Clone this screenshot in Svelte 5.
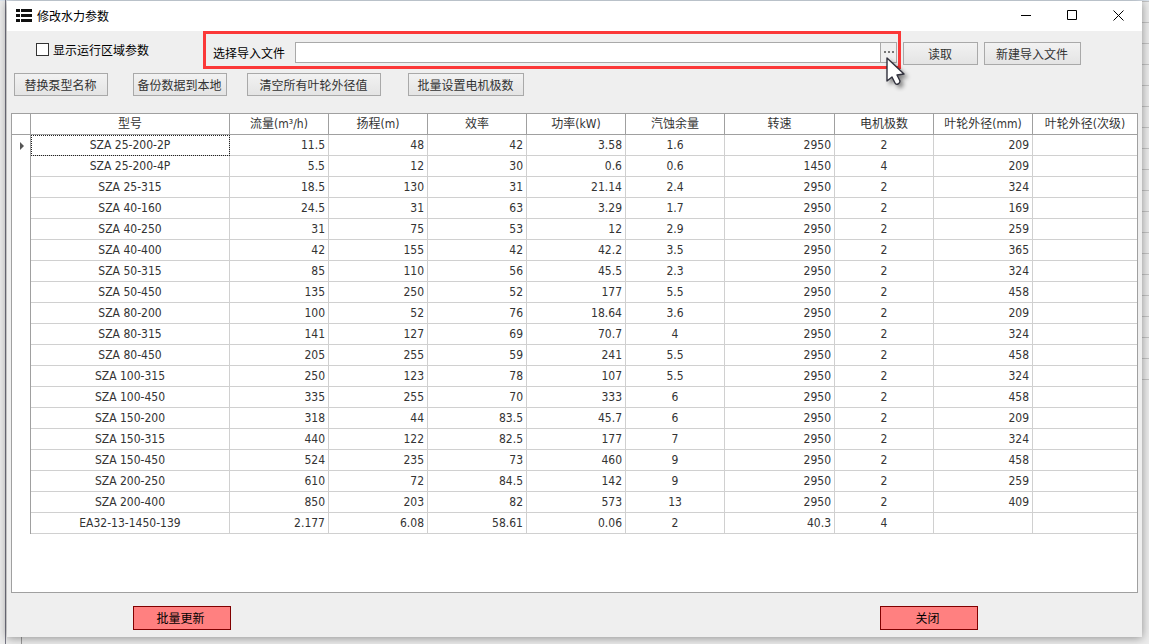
<script lang="ts">
    type Align = "center" | "right";

    interface Column {
        title: string;
        align: Align;
    }

    const columns: Column[] = [
        { title: "型号", align: "center" },
        { title: "流量(m³/h)", align: "right" },
        { title: "扬程(m)", align: "right" },
        { title: "效率", align: "right" },
        { title: "功率(kW)", align: "right" },
        { title: "汽蚀余量", align: "center" },
        { title: "转速", align: "right" },
        { title: "电机极数", align: "center" },
        { title: "叶轮外径(mm)", align: "right" },
        { title: "叶轮外径(次级)", align: "right" },
    ];

    const rows: string[][] = [
        ["SZA 25-200-2P", "11.5", "48", "42", "3.58", "1.6", "2950", "2", "209", ""],
        ["SZA 25-200-4P", "5.5", "12", "30", "0.6", "0.6", "1450", "4", "209", ""],
        ["SZA 25-315", "18.5", "130", "31", "21.14", "2.4", "2950", "2", "324", ""],
        ["SZA 40-160", "24.5", "31", "63", "3.29", "1.7", "2950", "2", "169", ""],
        ["SZA 40-250", "31", "75", "53", "12", "2.9", "2950", "2", "259", ""],
        ["SZA 40-400", "42", "155", "42", "42.2", "3.5", "2950", "2", "365", ""],
        ["SZA 50-315", "85", "110", "56", "45.5", "2.3", "2950", "2", "324", ""],
        ["SZA 50-450", "135", "250", "52", "177", "5.5", "2950", "2", "458", ""],
        ["SZA 80-200", "100", "52", "76", "18.64", "3.6", "2950", "2", "209", ""],
        ["SZA 80-315", "141", "127", "69", "70.7", "4", "2950", "2", "324", ""],
        ["SZA 80-450", "205", "255", "59", "241", "5.5", "2950", "2", "458", ""],
        ["SZA 100-315", "250", "123", "78", "107", "5.5", "2950", "2", "324", ""],
        ["SZA 100-450", "335", "255", "70", "333", "6", "2950", "2", "458", ""],
        ["SZA 150-200", "318", "44", "83.5", "45.7", "6", "2950", "2", "209", ""],
        ["SZA 150-315", "440", "122", "82.5", "177", "7", "2950", "2", "324", ""],
        ["SZA 150-450", "524", "235", "73", "460", "9", "2950", "2", "458", ""],
        ["SZA 200-250", "610", "72", "84.5", "142", "9", "2950", "2", "259", ""],
        ["SZA 200-400", "850", "203", "82", "573", "13", "2950", "2", "409", ""],
        ["EA32-13-1450-139", "2.177", "6.08", "58.61", "0.06", "2", "40.3", "4", "", ""],
    ];

    let showRange = $state(false);
    let filePath = $state("");
    let current = $state(0);
</script>

<div class="desktop">
    <div class="dialog">
        <header class="titlebar">
            <svg class="app-icon" width="16" height="13" viewBox="0 0 16 13" shape-rendering="crispEdges">
                <path d="M0 0h4v3H0zM5 0h11v3H5zM0 5h4v3H0zM5 5h11v3H5zM0 10h4v3H0zM5 10h11v3H5z" fill="#111" />
            </svg>
            <h1>修改水力参数</h1>
            <button class="caption" aria-label="最小化">
                <svg width="11" height="11" viewBox="0 0 11 11"><path d="M0 5.5h10" /></svg>
            </button>
            <button class="caption" aria-label="最大化">
                <svg width="11" height="11" viewBox="0 0 11 11"><path d="M.5 .5h9v9h-9z" /></svg>
            </button>
            <button class="caption" aria-label="关闭窗口">
                <svg width="11" height="11" viewBox="0 0 11 11"><path d="M.5 .5l10 10M10.5 .5l-10 10" /></svg>
            </button>
        </header>

        <!-- Import row -->
        <div class="import-row">
            <label class="check">
                <input type="checkbox" bind:checked={showRange} />
                显示运行区域参数
            </label>
            <div class="picker">
                <label for="import-file">选择导入文件</label>
                <div class="file-box">
                    <input id="import-file" type="text" bind:value={filePath} />
                    <button class="browse" aria-label="浏览">
                        <svg width="10" height="2" viewBox="0 0 10 2"><path d="M0 0h2v2H0zM4 0h2v2H4zM8 0h2v2H8z" fill="#777" /></svg>
                    </button>
                </div>
                <svg class="cursor" width="28" height="36" viewBox="0 0 28 36">
                    <path
                        d="M2 1v23l5-4 3 6q1 2 3 1t2-3l-3-6 7-1z"
                        fill="#fff"
                        stroke="#30303c"
                        stroke-width="1.4"
                        stroke-linejoin="round"
                    />
                </svg>
            </div>
            <button class="btn read">读取</button>
            <button class="btn create">新建导入文件</button>
        </div>

        <!-- Batch tools -->
        <div class="tools">
            <button class="btn">替换泵型名称</button>
            <button class="btn">备份数据到本地</button>
            <button class="btn wide">清空所有叶轮外径值</button>
            <button class="btn poles">批量设置电机极数</button>
        </div>

        <div class="grid">
            <table>
                <colgroup>
                    <col class="w-mark" />
                    <col class="w-name" />
                    <col class="w-num" span="5" />
                    <col class="w-speed" />
                    <col class="w-num" span="2" />
                    <col />
                </colgroup>
                <thead>
                    <tr>
                        <th class="mark"></th>
                        {#each columns as column}
                            <th>{column.title}</th>
                        {/each}
                    </tr>
                </thead>
                <tbody>
                    {#each rows as row, r}
                        <tr onclick={() => (current = r)}>
                            <td class="mark">
                                {#if r === current}
                                    <svg width="4" height="8" viewBox="0 0 4 8"><path d="M0 0l4 4-4 4z" fill="#555" /></svg>
                                {/if}
                            </td>
                            {#each row as cell, c}
                                <td class={columns[c].align} class:focused={r === current && c === 0}>{cell}</td>
                            {/each}
                        </tr>
                    {/each}
                </tbody>
            </table>
        </div>

        <footer>
            <button class="danger">批量更新</button>
            <button class="danger">关闭</button>
        </footer>
    </div>
</div>

<style>
    :global(body) {
        margin: 0;
        font-family: "DejaVu Sans Condensed", "Noto Sans CJK SC", sans-serif;
        font-size: 12px;
        color: #000;
    }

    .desktop {
        box-sizing: border-box;
        min-height: 100vh;
        padding: 1px 7px 7px 7px;
        display: flex;
        background:
            linear-gradient(#777785, #777785) 5px 0 / 1px 100% no-repeat,
            linear-gradient(#999, #999) 21px 100% / 1px 8px no-repeat,
            linear-gradient(#dbe4ee, #dbe4ee) 0 0 / 100% 1px no-repeat,
            repeating-linear-gradient(#c4c4c4 0 1px, transparent 1px 21px) 100% 1px / 8px 379px no-repeat,
            #ececec;
        overflow: hidden;
    }

    .dialog {
        flex: 1;
        min-width: 0;
        display: flex;
        flex-direction: column;
        background: #efefef;
        box-shadow: 0 1px 9px rgba(0, 0, 0, 0.4);
    }

    .titlebar {
        box-sizing: border-box;
        display: flex;
        align-items: center;
        height: 30px;
        padding: 0 1px 2px 9px;
        background: #fff;
    }

    .titlebar h1 {
        flex: 1;
        margin: 0 0 0 5px;
        font-size: 12px;
        font-weight: normal;
    }

    .caption {
        width: 46px;
        height: 28px;
        padding: 0;
        display: flex;
        align-items: center;
        justify-content: center;
        border: 0;
        background: none;
    }

    .caption path {
        fill: none;
        stroke: #000;
    }

    .import-row {
        display: flex;
        align-items: flex-start;
        padding: 0 61px 0 29px;
    }

    .check {
        display: flex;
        align-items: center;
        gap: 4px;
        width: 167px;
        height: 36px;
    }

    .check input {
        appearance: none;
        box-sizing: border-box;
        width: 13px;
        height: 13px;
        margin: 0;
        border: 1px solid #333;
        background: #fff;
    }

    .check input:checked {
        box-shadow: inset 0 0 0 2px #fff;
        background: #333;
    }

    .picker {
        position: relative;
        flex: 1;
        box-sizing: border-box;
        display: flex;
        align-items: center;
        gap: 10px;
        height: 38px;
        padding: 4px 1px 0 7px;
        border: 3px solid #fb3838;
    }

    .file-box {
        flex: 1;
        display: flex;
        box-sizing: border-box;
        height: 21px;
        border: 1px solid #a9a9a9;
        background: #fff;
    }

    .file-box input {
        flex: 1;
        min-width: 0;
        padding: 0 3px;
        border: 0;
        outline: none;
        background: none;
        font: inherit;
    }

    .browse {
        width: 16px;
        padding: 0;
        display: flex;
        align-items: center;
        justify-content: center;
        border: 0;
        border-left: 1px solid #a9a9a9;
        background: #f0f0f0;
    }

    .cursor {
        position: absolute;
        right: -15px;
        top: 23px;
        z-index: 1;
        overflow: visible;
        filter: drop-shadow(3px 3px 2px rgba(0, 0, 0, 0.45));
    }

    .btn {
        box-sizing: border-box;
        width: 94px;
        height: 23px;
        padding: 0 1px 1px 0;
        border: 1px solid #a9a9a9;
        background: linear-gradient(#f2f2f2, #e4e4e4);
        color: #333;
        font: inherit;
        white-space: nowrap;
    }

    .read {
        width: 75px;
        margin: 11px 6px 0 2px;
    }

    .create {
        width: 97px;
        margin-top: 11px;
    }

    .tools {
        display: flex;
        padding: 4px 7px 0;
    }

    .tools .btn + .btn {
        margin-left: 25px;
    }

    .tools .btn + .wide {
        width: 134px;
        margin-left: 20px;
    }

    .tools .btn + .poles {
        width: 116px;
        margin-left: 27px;
    }

    .grid {
        flex: 1;
        margin: 17px 4px 0;
        border: 1px solid #a0a0a0;
        background: #fff;
    }

    table {
        width: 100%;
        table-layout: fixed;
        border-collapse: separate;
        border-spacing: 0;
        color: #333;
    }

    .w-mark {
        width: 19px;
    }

    .w-name {
        width: 199px;
    }

    .w-num {
        width: 99px;
    }

    .w-speed {
        width: 110px;
    }

    th,
    td {
        box-sizing: border-box;
        height: 21px;
        padding: 0 3px;
        border-right: 1px solid #d0d0d0;
        border-bottom: 1px solid #d0d0d0;
        font-weight: normal;
        line-height: 20px;
        white-space: nowrap;
    }

    th {
        border-color: #a0a0a0;
    }

    th:last-child,
    td:last-child {
        border-right: 0;
    }

    td.mark {
        padding: 0 0 0 8px;
        border-right-color: #a0a0a0;
        border-bottom: 0;
        line-height: 0;
    }

    .center {
        text-align: center;
    }

    .right {
        text-align: right;
    }

    .focused {
        outline: 1px dotted #222;
        outline-offset: -1px;
    }

    footer {
        display: flex;
        justify-content: space-between;
        padding: 13px 164px 7px 126px;
    }

    .danger {
        box-sizing: border-box;
        width: 98px;
        height: 24px;
        padding: 0 3px 1px 0;
        border: 1px solid #800000;
        background: #ff8080;
        color: #000;
        font: inherit;
    }
</style>
